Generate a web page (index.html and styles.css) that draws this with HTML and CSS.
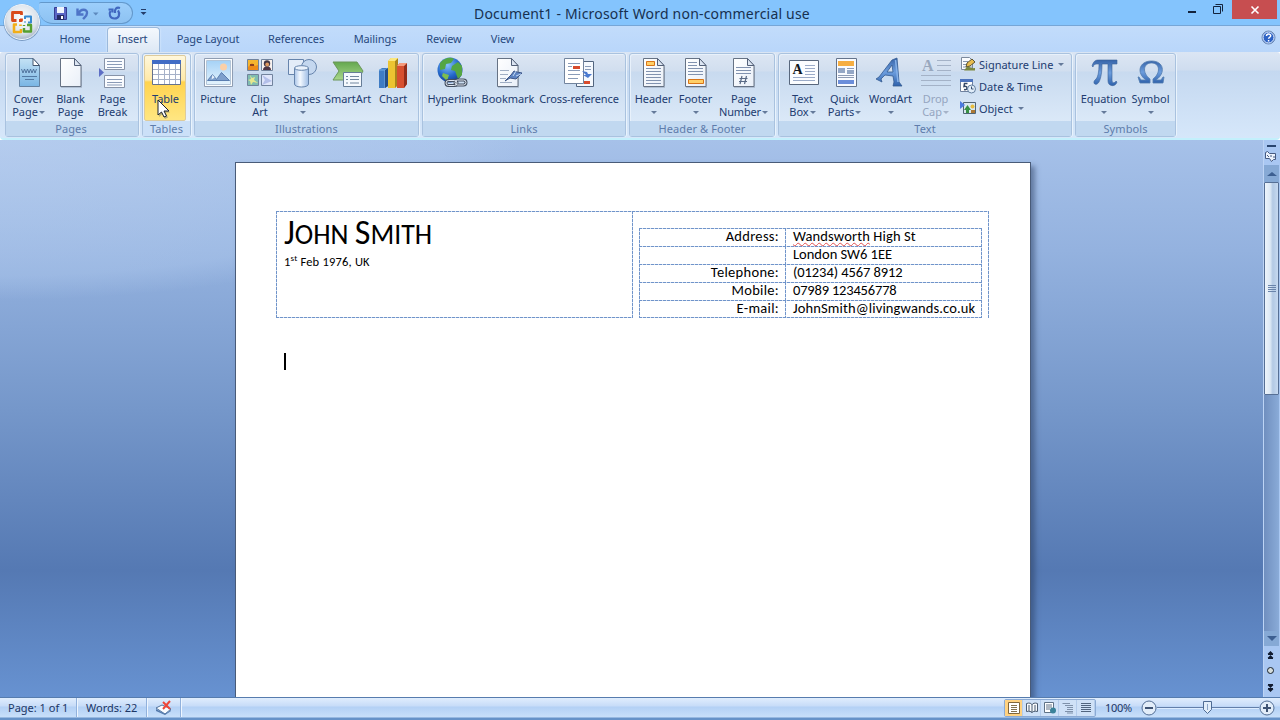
FILE: index.html
```html
<!DOCTYPE html>
<html lang="en">
<head>
<meta charset="utf-8">
<title>Document1 - Microsoft Word non-commercial use</title>
<link rel="stylesheet" href="styles.css">
</head>
<body>
<svg class="defs" width="0" height="0">
  <defs>
    <linearGradient id="gPage" x1="0" y1="0" x2="1" y2="1"><stop offset="0" stop-color="#fff"/><stop offset="1" stop-color="#e9eff8"/></linearGradient>
    <linearGradient id="gCover" x1="0" y1="0" x2="0" y2="1"><stop offset="0" stop-color="#c4e2f5"/><stop offset="1" stop-color="#79b5e4"/></linearGradient>
    <linearGradient id="gCyl" x1="0" x2="1"><stop offset="0" stop-color="#a9c4e8"/><stop offset=".4" stop-color="#f4f9ff"/><stop offset="1" stop-color="#9dbce5"/></linearGradient>
    <linearGradient id="gGreen" x1="0" y1="0" x2="0" y2="1"><stop offset="0" stop-color="#64a84f"/><stop offset="1" stop-color="#a9d78b"/></linearGradient>
    <linearGradient id="gBlue" x1="0" y1="0" x2="0" y2="1"><stop offset="0" stop-color="#3764a9"/><stop offset=".5" stop-color="#6c9ddd"/><stop offset="1" stop-color="#2f62ac"/></linearGradient>
    <linearGradient id="gSky" x1="0" y1="0" x2="0" y2="1"><stop offset="0" stop-color="#a6d2f6"/><stop offset="1" stop-color="#e3f3fd"/></linearGradient>
    <radialGradient id="gGlobe" cx=".4" cy=".3" r=".75"><stop offset="0" stop-color="#86c3fa"/><stop offset=".6" stop-color="#2468cb"/><stop offset="1" stop-color="#133a86"/></radialGradient>
    <radialGradient id="gOrb" cx=".5" cy=".4" r=".6"><stop offset="0" stop-color="#fff"/><stop offset=".7" stop-color="#dde4ec"/><stop offset="1" stop-color="#a7b5c8"/></radialGradient>
    <symbol id="sheet" viewBox="0 0 32 32"><path d="M6 3h14l7 7v21H6z" fill="#8b98ad" opacity=".45"/><path d="M5.500 1.500h14l6.500 7v21H5.500z" fill="url(#gPage)" stroke="#667284"/><path d="M19.500 1.500v7H26z" fill="#dce5f2" stroke="#536078"/></symbol>
  </defs>
</svg>
<div class="app">
  <header class="titlebar">
    <div class="qat">
      <svg width="72" height="24" viewBox="0 0 72 24">
        <path d="M1.500 6.500h12v12h-12z" fill="#5a66c5" stroke="#353d91"/><path d="M4 6h7v6H4z" fill="#eef4fd"/><path d="M4 14h7v5H4z" fill="#252c66"/><path d="M8 15h2v3H8z" fill="#fff"/>
        <path d="M24.500 7.500v6h6M25.500 13c2-6 9-5 8.500-1 0 3-2 4-4 6" fill="none" stroke="#4e74c7" stroke-width="2.400"/><path d="M40 11.500h5.500l-2.700 3z" fill="#5d89bd"/>
        <path d="M57.500 10c-2 3-.5 7.500 4 7.500s6-4.500 3.500-8M55.500 8.500h4v3M67 7c-3.500-1-5.500.5-5 5" fill="none" stroke="#4168c0" stroke-width="2.200"/>
      </svg>
    </div>
    <svg class="qat-more" width="7" height="8" viewBox="0 0 7 8"><path d="M1 1.500h5" stroke="#243e6b"/><path d="M.5 4h6l-3 3z" fill="#243e6b"/></svg>
    <h1 class="title">Document1 - Microsoft Word non-commercial use</h1>
    <div class="window-buttons">
      <svg width="56" height="20" viewBox="0 0 56 20"><path d="M12 12h8" stroke="#13233c" stroke-width="2"/><path d="M37.500 6.500h7v7h-7zM39.500 4.500h7v7" fill="none" stroke="#13233c"/></svg>
      <span class="close"><svg width="10" height="10" viewBox="0 0 10 10"><path d="M1.500 1.500l7 7M8.500 1.500l-7 7" stroke="#fff" stroke-width="1.600"/></svg></span>
    </div>
  </header>
  <div class="office-button">
    <svg width="40" height="40" viewBox="0 0 40 40"><circle cx="20" cy="20.500" r="18.500" fill="#49709c" opacity=".6"/><circle cx="20" cy="20" r="17.500" fill="url(#gOrb)" stroke="#eef5fc"/>
      <g fill="none"><path d="M19.500 13v-2.500h-9v8h4M17 18.500h2.500v-2" stroke="#d94a1b" stroke-width="2.800" stroke-linejoin="round"/><path d="M23 17v-2.500h6v6h-3M23 19.500v1" stroke="#3689d1" stroke-width="2" stroke-linejoin="round"/><path d="M15 22.500h-3V30h7v-3M18.500 24v-1.500" stroke="#f2ae18" stroke-width="2.600" stroke-linejoin="round"/><path d="M25 23h4v6.500h-7V26M22 24v-1" stroke="#56a02f" stroke-width="2.400" stroke-linejoin="round"/></g>
    </svg>
  </div>
  <nav class="tabs">
    <span class="tab t-home">Home</span><span class="tab t-insert active">Insert</span><span class="tab t-layout">Page Layout</span><span class="tab t-ref">References</span><span class="tab t-mail">Mailings</span><span class="tab t-review">Review</span><span class="tab t-view">View</span>
    <svg class="help" width="15" height="15" viewBox="0 0 15 15"><circle cx="7.500" cy="7.500" r="6.500" fill="#2e63c5" stroke="#6a88b4"/><circle cx="7.500" cy="7.500" r="5.500" fill="none" stroke="#e9f3ff"/><path d="M5.500 6c0-2.700 4.300-2.500 4.200-.2 0 1.500-2.100 1.400-2.100 3M7.600 10v1.500" fill="none" stroke="#fff" stroke-width="1.500"/></svg>
  </nav>
  <section class="ribbon">
    <div class="group g-pages"><div class="tools">
      <div class="tool w42"><svg class="icon" viewBox="0 0 32 32"><path d="M6.500 1.500H20l6.500 7v21h-20z" fill="url(#gCover)" stroke="#6482a2"/><path d="M20 1.500v7h6.500z" fill="#fff" stroke="#43566f"/><path d="M8.500 12l1.500 4 1.500-4 1.500 4 1.500-4 1.500 4 1.500-4 1.500 4 1.500-4 1.500 4 1.500-4" stroke="#4a6c97" stroke-width=".9" fill="none"/><path d="M9 19.500h15M12 22.500h9" stroke="#537aa4"/></svg><span>Cover</span><span>Page<i class="caret"></i></span></div>
      <div class="tool w42"><svg class="icon"><use href="#sheet"/></svg><span>Blank</span><span>Page</span></div>
      <div class="tool w42"><svg class="icon" viewBox="0 0 32 32"><path d="M7.500 1.500h20v11h-20zM7.500 18.500h20v12h-20z" fill="#fafcff" stroke="#8793a8"/><path d="M10 4.500h15M10 7.500h15M10 10.500h15M10 22.500h15M10 25.500h15M10 28h15" stroke="#8a9bb7"/><path d="M2 11l5 4.500L2 20z" fill="#5d6ec5"/></svg><span>Page</span><span>Break</span></div>
    </div><div class="caption">Pages</div></div>
    <div class="group g-tables hot"><div class="tools">
      <div class="tool w42 hover"><svg class="icon" viewBox="0 0 32 32"><path d="M2.500 3.500h28v24h-28z" fill="#fff" stroke="#65718c"/><path d="M2 3h29v4H2z" fill="#416cc5"/><path d="M3 12.500h27M3 17.500h27M3 22.500h27M8.500 7v20M14.500 7v20M19.500 7v20M25.500 7v20" stroke="#a6b1c8"/></svg><span>Table</span></div>
    </div><div class="caption">Tables</div></div>
    <div class="group g-illus"><div class="tools">
      <div class="tool w42"><svg class="icon" viewBox="0 0 32 32"><path d="M2.500 1.500h28v28h-28z" fill="#fbfdff" stroke="#8f9db2"/><path d="M5 4h23v23H5z" fill="url(#gSky)"/><circle cx="21.500" cy="10" r="3.500" fill="#fbd0a8"/><path d="M5.500 23.500l5-6 4 5 5-7 8 8z" fill="#7fa1cd" stroke="#5b7eb0"/><path d="M10.500 17.500l2 3-3 2z" fill="#e8f2fb"/><path d="M4.500 3.500h24v24h-24z" fill="none" stroke="#b3c5d8"/></svg><span>Picture</span></div>
      <div class="tool w42"><svg class="icon" viewBox="0 0 32 32"><g stroke="#71839d"><path d="M3.500 2.500h11v11h-11z" fill="#f5b52e"/><path d="M17.500 2.500h11v11h-11z" fill="#f8f2ef"/><path d="M3.500 17.500h11v11h-11z" fill="#80bdb1"/><path d="M17.500 17.500h11v11h-11z" fill="#dfe6fa"/></g><path d="M4 10l4-4 3 3 3-1v5H4z" fill="#ee8b18"/><path d="M6 7h4v2H6z" fill="#8d401f"/><path d="M19 13c0-5 8-5 8 0z" fill="#4d3545"/><circle cx="23" cy="6.500" r="3.200" fill="#443744"/><circle cx="23.200" cy="7.500" r="1.900" fill="#df9961"/><path d="M6 18l2 3 3-1-1 3 4 3-5-1-2 3-1-4-2-1 3-1z" fill="#e6e88d"/><path d="M18 18l10 6-10 4 3-5z" fill="#b3bfe9"/></svg><span>Clip</span><span>Art</span></div>
      <div class="tool w42"><svg class="icon" viewBox="0 0 32 32"><g stroke="#6684ac"><path d="M2.500 2.500h15v15h-15z" fill="#e3ecf8"/><circle cx="23" cy="10" r="7.500" fill="#c4d7ef"/><path d="M8.500 11v16c0 4 14 4 14 0V11" fill="url(#gCyl)"/><ellipse cx="15.500" cy="11" rx="7" ry="2.300" fill="#eaf2fc"/></g></svg><span>Shapes</span><span><i class="caret"></i></span></div>
      <div class="tool w50"><svg class="icon" viewBox="0 0 32 32"><path d="M1 5h24l6 9-5 9H1l6-9z" fill="url(#gGreen)" stroke="#6a9659"/><path d="M11.500 15.500h18v14h-18z" fill="#f5f9fd" stroke="#667d97"/><path d="M14 19.500h2M14 22.500h2M14 26h2M18 19.500h9M18 22.500h9M18 26h9" stroke="#71869f"/></svg><span>SmartArt</span></div>
      <div class="tool w42 chart"><svg class="icon" viewBox="0 0 32 32"><path d="M2 13l3-2h6v18l-3 2H2z" fill="#3f7cc4"/><path d="M2 13h6v18M8 13l3-2" stroke="#77aee5" fill="none"/><path d="M8 31l3-2V11l-3 2z" fill="#264f88"/><path d="M11 4l3-3h7v27l-3 3h-7z" fill="#ecc431"/><path d="M18 4l3-3v27l-3 3z" fill="#a9851c"/><path d="M11 4l3-3h7l-3 3z" fill="#fbe77e"/><path d="M20 9l3-3h7v21l-3 4h-7z" fill="#d75030"/><path d="M27 9l3-3v21l-3 4z" fill="#922d1b"/><path d="M20 9l3-3h7l-3 3z" fill="#f49a7c"/></svg><span>Chart</span></div>
    </div><div class="caption">Illustrations</div></div>
    <div class="group g-links"><div class="tools">
      <div class="tool w54"><svg class="icon" viewBox="0 0 32 32"><circle cx="14" cy="13" r="12.500" fill="url(#gGlobe)"/><path d="M4 6c5-6 11-6 14-4l-3 4-5 1-1 5-5 1zM16 9l6-4 4 4v9l-4 4-3-8-4-1z" fill="#54a643"/><path d="M7 16l6 2-2 6-5-5z" fill="#7fbd50"/><g fill="none"><rect x="10" y="23.500" width="11" height="5" rx="2.500" stroke="#444f60" stroke-width="3"/><rect x="19" y="23" width="11" height="5" rx="2.500" stroke="#444f60" stroke-width="3"/><rect x="10" y="23.500" width="11" height="5" rx="2.500" stroke="#dfe6f0"/><rect x="19" y="23" width="11" height="5" rx="2.500" stroke="#dfe6f0"/></g></svg><span>Hyperlink</span></div>
      <div class="tool w58"><svg class="icon" viewBox="0 0 32 32"><use href="#sheet"/><path d="M8 13.500h9M8 17.500h8M8 21.500h6M8 25.500h12" stroke="#a0aec4"/><path d="M13 24l6-6 3-4 3 1 5 1-3 3-3 3-6-1z" fill="#5d83c2" stroke="#3c5588"/><path d="M21 19l3-5M24 19l5-2" stroke="#c2d8f3"/></svg><span>Bookmark</span></div>
      <div class="tool w84"><svg class="icon" viewBox="0 0 32 32"><path d="M13.500 4.500h17v25h-17z" fill="#f5f9fe" stroke="#52657f"/><path d="M1.500 1.500h19v25h-19z" fill="#fff" stroke="#72849e"/><path d="M5 6.500h12M5 9.500h4M5 13.500h12M5 17.500h12M5 21.500h10M22 9.500h6M22 12.500h6" stroke="#899bb8"/><path d="M10 9h7v3h-7zM21 24h6v3h-6z" fill="#d84b2c"/><path d="M19 14l5 1 1 2h4l-4 4-5-3h3z" fill="#4b7ad0"/></svg><span>Cross-reference</span></div>
    </div><div class="caption">Links</div></div>
    <div class="group g-head"><div class="tools">
      <div class="tool w42"><svg class="icon" viewBox="0 0 32 32"><use href="#sheet"/><path d="M8 11.500h15M8 14.500h15M8 17.500h15M8 20.500h15M8 23.500h15M8 26.500h15" stroke="#8192af"/><path d="M8.500 4.500h8v4h-8z" fill="#ffcf68" stroke="#d87519"/></svg><span>Header</span><span><i class="caret"></i></span></div>
      <div class="tool w42"><svg class="icon" viewBox="0 0 32 32"><use href="#sheet"/><path d="M8 5.500h9M8 8.500h9M8 11.500h15M8 14.500h15M8 17.500h15" stroke="#8192af"/><path d="M8.500 22.500h15v4h-15z" fill="#ffcf68" stroke="#d87519"/></svg><span>Footer</span><span><i class="caret"></i></span></div>
      <div class="tool w54 number"><svg class="icon" viewBox="0 0 32 32"><use href="#sheet"/><path d="M8 10.500h15M8 13.500h15M8 16.500h15" stroke="#8192af"/><path d="M14 19l-2 8M18.500 19l-2 8M11.500 21.500h8M11 24.500h8" stroke="#5b6b86" stroke-width="1.200"/></svg><span>Page</span><span>Number<i class="caret"></i></span></div>
    </div><div class="caption">Header &amp; Footer</div></div>
    <div class="group g-text"><div class="tools">
      <div class="tool w42"><svg class="icon" viewBox="0 0 32 32"><path d="M2.500 3.500h29v24h-29z" fill="#fbfdff" stroke="#58677d"/><path d="M18 8.500h10M18 11.500h10M18 14.500h10M18 17.500h10M6 20.500h22M6 23.500h22" stroke="#9babc8"/><text x="5.500" y="17" class="glyph-a">A</text></svg><span>Text</span><span>Box<i class="caret"></i></span></div>
      <div class="tool w42"><svg class="icon" viewBox="0 0 32 32"><path d="M7.500 1.500h20v28h-20z" fill="#f9fbff" stroke="#64738b"/><path d="M9 4h16v5H9z" fill="#f6ae42"/><path d="M9 11h7v5H9zM18 13h7v4h-7z" fill="#94a7c6"/><path d="M9 18.500h16M9 20.500h16M18 11.500h7" stroke="#8e9cb6"/><path d="M9 23h16v4H9z" fill="#6c8eda"/></svg><span>Quick</span><span>Parts<i class="caret"></i></span></div>
      <div class="tool w50"><svg class="icon" viewBox="0 0 32 32"><path d="M1 22l3-2L17 3l5-2 2 24 3 4h-9l1-4-1-6-8-1-4 4 1 3zM12 15h6l-1-7z" fill="url(#gBlue)" fill-rule="evenodd" stroke="#335b91" stroke-width=".8"/><path d="M20.500 3l2.500 22" stroke="#86b1e8" stroke-width="1.500"/></svg><span>WordArt</span><span><i class="caret"></i></span></div>
      <div class="tool w40 disabled"><svg class="icon" viewBox="0 0 32 32"><text x="2" y="14" class="glyph-drop">A</text><path d="M17 3.500h14M17 8.500h14M17 13.500h14M1 18.500h30M1 23.500h30M1 28.500h30" stroke="#a4b2c7"/></svg><span>Drop</span><span>Cap<i class="caret"></i></span></div>
      <div class="small-tools">
        <div class="small"><svg width="16" height="16" viewBox="0 0 16 16"><path d="M1.500 1.500h8l3 3v9h-11z" fill="#fafcff" stroke="#7c899c"/><path d="M3 5.500h5M3 8.500h4M3 11h9" stroke="#8897ae"/><path d="M6 11l1-4 5-4 3 3-5 4z" fill="#e8bc50" stroke="#5c5330"/><path d="M6 12c3-3 4 1 9 0v2.500H4z" fill="#7b873f"/></svg><span>Signature Line</span><i class="caret"></i></div>
        <div class="small"><svg width="16" height="16" viewBox="0 0 16 16"><path d="M.5 1.500h12v12H.500z" fill="#fff" stroke="#6f819e"/><path d="M0 1h13v3H0z" fill="#4d74bd"/><path d="M7.500 5.500h-3l-.5 3c4-1 4 4 0 3" fill="none" stroke="#344867" stroke-width="1.500"/><circle cx="11.500" cy="11" r="4" fill="#e1edf9" stroke="#627e9e"/><path d="M11.500 8.500V11h2" fill="none" stroke="#385170"/></svg><span>Date &amp; Time</span></div>
        <div class="small"><svg width="16" height="16" viewBox="0 0 16 16"><path d="M3.500 2.500h12v11h-12z" fill="#d8e7ef" stroke="#506575"/><path d="M0 1l5 4-5 4z" fill="#4b7ae0"/><path d="M4 10l3.500-5L11 10H9v3H6v-3z" fill="#389044"/><circle cx="12.500" cy="6.500" r="2" fill="#e8bd3e"/><path d="M11 10h4v3h-4z" fill="#ac7835"/></svg><span>Object</span><i class="caret"></i></div>
      </div>
    </div><div class="caption">Text</div></div>
    <div class="group g-sym"><div class="tools">
      <div class="tool w50"><svg class="icon" viewBox="0 0 32 32"><path d="M4 9c2-6 4-6 8-6h17v4h-5v16c0 4 3 3 4 1l1 1c-1 5-9 5-9-1V7h-6c0 8-1 14-3 18-3 5-7 1-4-2 3-2 4-8 4-16-4 0-5 0-6 3z" fill="url(#gBlue)" stroke="#3a6198" stroke-width=".6"/></svg><span>Equation</span><span><i class="caret"></i></span></div>
      <div class="tool w44"><svg class="icon" viewBox="0 0 32 32"><path d="M4 20l2 3h5C1 16 4 4 16.500 4S31 16 21 23h5l2-3h1l-1 6H18v-4c8-6 7-16-1.500-16S7 16 15 22v4H5l-2-6z" fill="url(#gBlue)" stroke="#527caf" stroke-width=".8"/></svg><span>Symbol</span><span><i class="caret"></i></span></div>
    </div><div class="caption">Symbols</div></div>
  </section>
  <main class="workspace">
    <article class="page">
      <div class="letterhead">
        <div class="person"><h2><b>J</b>OHN <b>S</b>MITH</h2><p>1<sup>st</sup> Feb 1976, UK</p></div>
        <div class="contact">
          <div class="row"><span class="key">Address:</span><span class="val v1"><u>Wandsworth</u> High St</span></div>
          <div class="row"><span class="key"></span><span class="val v2">London SW6 1EE</span></div>
          <div class="row"><span class="key">Telephone:</span><span class="val v3">(01234) 4567 8912</span></div>
          <div class="row"><span class="key">Mobile:</span><span class="val v4">07989 123456778</span></div>
          <div class="row"><span class="key">E-mail:</span><span class="val v5">JohnSmith@livingwands.co.uk</span></div>
        </div>
      </div>
      <div class="insertion"></div>
    </article>
    <aside class="scroll">
      <div class="split"></div>
      <svg class="ruler" width="14" height="14" viewBox="0 0 14 14"><path d="M1.500 2.500l2-1 2 2h6v6h-2l-2 2-2-3h-4z" fill="#edf3fd" stroke="#475b81"/><path d="M3 5l2 2M7 5v2M9 7h2" stroke="#475b81"/></svg>
      <div class="arrow"><svg width="10" height="6" viewBox="0 0 10 6"><path d="M0 5l5-4 5 4z" fill="#3d5f91"/></svg></div>
      <div class="thumb"><svg width="8" height="8" viewBox="0 0 8 8"><path d="M0 .5h8M0 2.500h8M0 4.500h8M0 6.500h8" stroke="#6a84ab"/></svg></div>
      <div class="track"></div>
      <div class="arrow"><svg width="10" height="6" viewBox="0 0 10 6"><path d="M0 0h10L5 5z" fill="#3d5f91"/></svg></div>
      <svg class="browse" width="14" height="51" viewBox="0 0 14 51"><path d="M3.500 8L6.500 5l3 3zM3.500 12l3-3 3 3z" fill="#111b2f"/><circle cx="6.500" cy="24.500" r="3" fill="#d5dddc" stroke="#15202c"/><path d="M3.500 39l3 3 3-3zM3.500 43l3 3 3-3z" fill="#111b2f"/><path d="M4 8.500h5M4 12.500h5M4 38.500h5M4 42.500h5" stroke="#111b2f"/></svg>
    </aside>
  </main>
  <footer class="status">
    <span class="stat s-page">Page: 1 of 1</span><span class="stat s-words">Words: 22</span>
    <span class="stat s-proof"><svg width="18" height="16" viewBox="0 0 18 16"><path d="M1 8l6-3 9 4-6 5z" fill="#f8fbff" stroke="#52749e"/><path d="M1 9l9 5v1L1 11zM10 14l6-4v1l-6 4" fill="#5379ac"/><path d="M8 2l7 7M15 1L8 9" stroke="#ee4638" stroke-width="2"/></svg></span>
    <div class="views">
      <span class="view on"><svg width="12" height="12" viewBox="0 0 12 12"><path d="M.5.500h11v11H.500z" fill="#fff" stroke="#80663b"/><path d="M3 3.500h6M3 5.500h6M3 7.500h6M3 9.500h6" stroke="#83714f"/></svg></span>
      <span class="view"><svg width="12" height="12" viewBox="0 0 12 12"><path d="M.5 1.500c3-1 5 0 5.500 1 .5-1 3-2 5.500-1v8c-3-.5-5 0-5.500 1-.5-1-3-1.500-5.500-1z" fill="#f7f9fb" stroke="#4b5c72"/><path d="M6 2v9M2 4h2M2 6h2M2 8h2M8 4h2M8 6h2M8 8h2" stroke="#4b5c72"/></svg></span>
      <span class="view"><svg width="12" height="12" viewBox="0 0 12 12"><path d="M.5.500h9v10h-9z" fill="#fff" stroke="#5f7286"/><path d="M2 3h6M2 5h6M2 7h4" stroke="#607387"/><circle cx="9" cy="8.500" r="3" fill="#3b829a"/></svg></span>
      <span class="view"><svg width="12" height="12" viewBox="0 0 12 12"><path d="M1 1.500h7M3 3.500h8M5 5.500h6M5 7.500h6M3 9.500h8M1 1v1M5 11h6" stroke="#7f91aa"/></svg></span>
      <span class="view"><svg width="12" height="12" viewBox="0 0 12 12"><path d="M1 1.500h10M1 3.500h10M1 5.500h10M1 7.500h10M1 9.500h10" stroke="#52657f"/></svg></span>
    </div>
    <span class="percent">100%</span>
    <svg class="zoom" width="138" height="20" viewBox="0 0 138 20"><path d="M19 9.500h102" stroke="#637fa9"/><path d="M19 10.500h102" stroke="#dcecff"/><g fill="#e2edf9" stroke="#536f96"><circle cx="11" cy="10" r="7"/><circle cx="129" cy="10" r="7"/></g><path d="M7 10h8M125 10h8M129 6v8" stroke="#3f5474" stroke-width="2"/><path d="M65.500 3.500h8v8l-4 4-4-4z" fill="#e1edf9" stroke="#4e6b93"/><path d="M69.500 6v6" stroke="#8ba5c7"/></svg>
  </footer>
  <svg class="pointer" width="16" height="22" viewBox="0 0 16 22"><path d="M2 3v15l3.500-3 2.500 5 3-1.500-2.500-5H13z" fill="#49596e" opacity=".4"/><path d="M1 1v15l3.500-3 2.500 5 2.500-1L7 12h5z" fill="#fff" stroke="#18202e"/></svg>
</div>
</body>
</html>
```
FILE: styles.css
```css
* { box-sizing: border-box; }
body { margin: 0; width: 1280px; height: 720px; overflow: hidden; font: 11px/13px "Noto Sans", "Open Sans", sans-serif; color: #223c70; }
.defs { position: absolute; }
.app { position: relative; display: flex; flex-direction: column; width: 1280px; height: 720px; }
svg { display: block; flex: none; }

.titlebar { display: flex; height: 25px; background: #84c4fd; }
.qat { width: 94px; height: 22px; margin: 2px 0 0 39px; padding-left: 14px; border: 1px solid #6398cb; border-left: 0; border-radius: 2px 11px 11px 14px; background: linear-gradient(#9ccefb, #8dc2f2); }
.qat svg { margin-top: -2px; }
.qat-more { margin: 8px 0 0 7px; }
.title { width: 980px; margin: 0 0 0 5px; font-size: 14px; line-height: 27px; font-weight: 400; text-align: center; color: #17304f; letter-spacing: .2px; white-space: nowrap; }
.window-buttons { display: flex; margin-left: auto; margin-right: 3px; }
.close { width: 45px; height: 19px; display: flex; align-items: center; justify-content: center; background: #c74e50; }
.office-button { position: absolute; left: 2px; top: 2px; }

.tabs { display: flex; height: 27px; padding-left: 43px; border-top: 1px solid #76a6d7; background: linear-gradient(#c2dcfb, #b9d6fa); color: #28497e; }
.tab { padding-top: 6px; text-align: center; white-space: nowrap; letter-spacing: -.1px; }
.t-home { width: 64px; } .t-insert { width: 53px; } .t-layout { width: 96px; } .t-ref { width: 80px; } .t-mail { width: 78px; } .t-review { width: 60px; } .t-view { width: 57px; }
.tab.active { margin-top: 1px; padding: 4px 2px 0 0; border: 1px solid #9bb9dc; border-bottom: 0; border-radius: 4px 4px 0 0; background: linear-gradient(#f4f8fd, #dde8f5); box-shadow: 0 0 2px #eaf6ff; }
.help { margin: 4px 4px 0 auto; }

.ribbon { display: flex; height: 88px; padding: 1px 0 0 5px; border-bottom: 2px solid #c3f0fc; border-radius: 3px 3px 4px 4px; background: linear-gradient(#dbe6f4 0, #cfddef 18px, #c4d8f0 19px, #d6e7fa 100%); }
.group { display: flex; flex-direction: column; flex: none; height: 84px; margin-right: 3px; border: 1px solid #a9c2df; border-radius: 3px; background: linear-gradient(#dce6f3 0, #d1deef 17px, #c8daef 18px, #dbe9f8 68px); box-shadow: inset 1px 1px #e8f1fb, 1px 0 #e9f3fc; }
.g-pages { width: 134px; } .g-tables { width: 49px; } .g-illus { width: 225px; } .g-links { width: 204px; } .g-head { width: 146px; } .g-text { width: 294px; } .g-sym { width: 101px; }
.hot { background: linear-gradient(#eef4fb, #dfebfa 50%, #edf6ff); }
.tools { display: flex; height: 67px; padding: 1px 0 0 2px; }
.g-pages .tools { padding-left: 1.5px; }
.g-tables .tools { padding-left: 1px; }
.caption { height: 15px; line-height: 15px; text-align: center; color: #5e7cab; background: #c1d8f0; letter-spacing: .1px; }
.g-pages .caption { padding-right: 2px; }
.hot .caption { background: #cbe0f8; }
.tool { display: flex; flex-direction: column; align-items: center; height: 66px; padding-top: 2px; white-space: nowrap; letter-spacing: -.05px; }
.g-head .tool, .g-text .tool, .g-sym .tool { padding-left: 1px; }
.tool span { height: 13px; white-space: nowrap; }
.w40 { width: 40px; } .w42 { width: 42px; } .w44 { width: 44px; } .w50 { width: 50px; } .w54 { width: 54px; } .w58 { width: 58px; } .w84 { width: 84px; letter-spacing: -.12px; }
.chart { width: 40px; }
.number { letter-spacing: -.2px; }
.icon { width: 32px; height: 32px; margin-bottom: 3px; }
.hover { padding: 1px 0 0 1px; border: 1px solid #ddcb9c; border-radius: 2px; background: linear-gradient(#fff7db 0, #ffe9a8 24px, #ffd34f 26px, #ffe682 100%); }
.disabled { color: #95a5c0; }
.caret { display: inline-block; border: 3px solid transparent; border-top-color: #657a9a; border-bottom: 0; margin-left: 3px; vertical-align: 2px; }
span > .caret:only-child { margin-left: 1px; }
.disabled .caret { border-top-color: #a6b3c8; }
.small-tools { padding-left: 5px; margin-top: -2px; }
.small { display: flex; align-items: center; height: 22px; white-space: nowrap; }
.small span { margin-left: 3px; }
.small .caret { margin-left: 5px; }
.glyph-a { font: bold 14px "Liberation Serif", serif; fill: #111820; }
.glyph-drop { font: bold 16px "Liberation Serif", serif; fill: #98a7bd; }

.workspace { display: flex; flex: none; height: 557px; padding-left: 235px; overflow: hidden; background: radial-gradient(ellipse 520px 160px at 0 0, rgba(190, 211, 241, .6), rgba(180, 205, 240, .35) 85%, rgba(180, 205, 240, 0) 100%), linear-gradient(#a6c1e9 0, #94b2df 110px, #7597ca 270px, #5579b3 430px, #6792d1 557px); }
.page { width: 796px; height: 570px; margin-top: 22px; padding: 48px 0 0 40px; border: 1px solid #495b78; background: #fff; box-shadow: 4px 4px 5px rgba(40, 60, 95, .5); color: #000; font-family: Carlito, Lato, sans-serif; }
.letterhead, .person, .contact, .row { --h: repeating-linear-gradient(90deg, #7094ca 0 3px, #d3dff0 3px 4px); --v: repeating-linear-gradient(#7094ca 0 3px, #d3dff0 3px 4px); background-repeat: no-repeat; }
.letterhead { display: flex; gap: 6px; width: 713px; height: 107px; background-image: var(--h), var(--v); background-size: 100% 1px, 1px 100%; background-position: top, right; }
.person { width: 357px; padding: 6px 0 0 8px; background-image: var(--v), var(--v), var(--h); background-size: 1px 100%, 1px 100%, 100% 1px; background-position: left, right, bottom; }
.person h2 { margin: 0; font-size: 27.800px; line-height: 36px; height: 36px; font-weight: 400; white-space: nowrap; }
.person b { font-size: 34px; font-weight: 400; line-height: 0; }
.person p { margin: 2px 0 0; font-size: 12.500px; line-height: 14px; letter-spacing: .2px; }
.person sup { font-size: 9px; line-height: 0; }
.contact { width: 343px; height: 90px; margin-top: 17px; background-image: var(--v), var(--v), var(--h); background-size: 1px 100%, 1px 100%, 100% 1px; background-position: left, right, bottom; }
.row { display: flex; height: 18px; font-size: 14.500px; line-height: 17px; background-image: var(--h), var(--v); background-size: 100% 1px, 1px 100%; background-position: 0 0, 146px 0; }
.key { width: 140px; text-align: right; letter-spacing: .3px; }
.val { margin-left: 14px; white-space: nowrap; }
.v1, .v5 { letter-spacing: .13px; }
.v3 { letter-spacing: -.08px; }
.v4 { letter-spacing: -.18px; }
.val u { text-decoration: underline wavy #e05050 1px; text-underline-offset: 1px; }
.insertion { width: 2px; height: 17px; margin: 35px 0 0 8px; background: #000; }

.scroll { display: flex; flex-direction: column; width: 17px; margin-left: auto; border-left: 1px solid #bdd4f5; background: #a9c7f2; }
.split { width: 9px; height: 2px; margin: 5px 0 0 3px; background: #29456f; }
.ruler { margin-top: 3px; }
.arrow { display: flex; flex: none; align-items: center; justify-content: center; width: 15px; height: 15px; background: #86a9d5; }
.ruler + .arrow { height: 17px; margin-top: 1px; }
.thumb { display: flex; flex: none; align-items: center; justify-content: center; width: 15px; height: 213px; border: 1px solid #566f95; border-radius: 1px; background: linear-gradient(90deg, #edf4fb, #dce8f5 40%, #b3c9e4 60%, #c6d9f0); }
.track { width: 15px; height: 236px; flex: none; background: linear-gradient(90deg, #708fbf, #8aabd8); }

.status { display: flex; height: 23px; border-top: 1px solid #567cae; background: linear-gradient(#e0edfd 0, #c7dcf8 8px, #b3d0f5 9px, #c8dffa 19px, #6692c8 20px); color: #1c3665; line-height: 20px; }
.stat { height: 19px; border-right: 1px solid #91b1dc; box-shadow: 1px 0 #eef6ff; }
.s-page { width: 77px; padding-left: 8px; } .s-words { width: 70px; padding-left: 9px; } .s-proof { width: 34px; padding: 2px 0 0 8px; }
.views { display: flex; width: 92px; height: 18px; margin: 1px 0 0 auto; border: 1px solid #8baad4; border-radius: 2px; background: #cfe1f7; }
.view { display: flex; align-items: center; justify-content: center; width: 18px; border-right: 1px solid #b4cceb; }
.on { background: #ffd281; }
.percent { width: 33px; margin-left: 9px; letter-spacing: -.3px; }
.zoom { margin-right: 4px; }
.pointer { position: absolute; left: 157px; top: 99px; }
```
